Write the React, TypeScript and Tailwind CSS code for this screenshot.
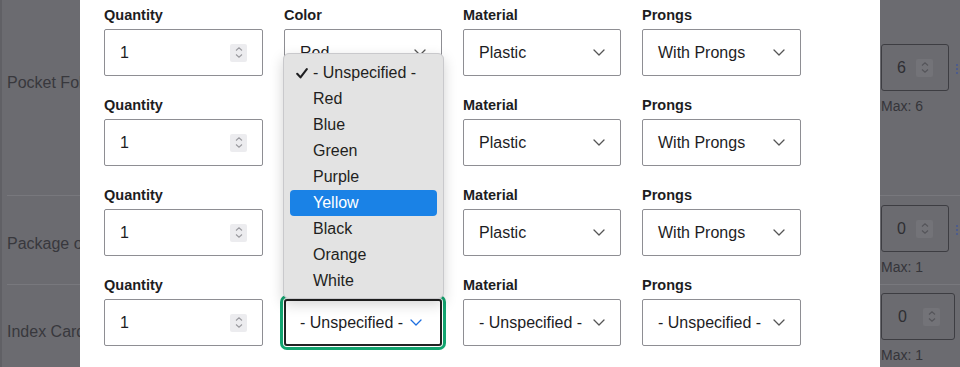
import React from 'react';

const font = { fontFamily: '"Liberation Sans", Arial, sans-serif' };

const Chevron = ({ color = '#555' }: { color?: string }) => (
  <svg width="12" height="7" viewBox="0 0 12 7" fill="none">
    <path d="M1 1l5 5 5-5" stroke={color} strokeWidth="1.3" strokeLinecap="round" strokeLinejoin="round" />
  </svg>
);

const Spinner = ({ dim = false }: { dim?: boolean }) => (
  <div
    className={
      dim
        ? 'flex h-[18px] w-[17px] flex-col items-center justify-center gap-[3px] rounded-[2px] bg-[#737378]'
        : 'flex h-[18px] w-[17px] flex-col items-center justify-center gap-[3px] rounded-[2px] bg-[#ececef]'
    }
  >
    <svg width="8" height="4" viewBox="0 0 8 4" fill="none">
      <path d="M1 3.5L4 0.8 7 3.5" stroke={dim ? '#55555a' : '#9a9a9f'} strokeWidth="1.1" />
    </svg>
    <svg width="8" height="4" viewBox="0 0 8 4" fill="none">
      <path d="M1 0.5L4 3.2 7 0.5" stroke={dim ? '#55555a' : '#9a9a9f'} strokeWidth="1.1" />
    </svg>
  </div>
);

const Dots = () => (
  <div className="ml-[7px] flex flex-col gap-[2px] pt-[3px]">
    <span className="h-[2px] w-[2px] bg-[#4d5c8c]" />
    <span className="h-[2px] w-[2px] bg-[#4d5c8c]" />
    <span className="h-[2px] w-[2px] bg-[#4d5c8c]" />
  </div>
);

// the page behind the dialog, already dimmed
const BgRow = ({
  name,
  value,
  max,
  wide,
  dots,
  className,
}: {
  name: string;
  value: string;
  max: string;
  wide?: boolean;
  dots?: boolean;
  className: string;
}) => (
  <div className={className}>
    <div className="flex items-start">
      <div className="flex w-[874px] items-center self-stretch pt-[6px] text-[16px] text-[#38383d]">{name}</div>
      <div className="flex flex-col">
        <div className="flex items-center">
          <div
            className={
              wide
                ? 'flex h-[47px] w-[74px] items-center justify-between rounded-[3px] border border-[#3d3d42] pl-[16px] pr-[14px] text-[16px] text-[#2f2f33]'
                : 'flex h-[47px] w-[68px] items-center justify-between rounded-[3px] border border-[#3d3d42] pl-[15px] pr-[15px] text-[16px] text-[#2f2f33]'
            }
          >
            <span>{value}</span>
            <Spinner dim />
          </div>
          {dots && <Dots />}
        </div>
        <div className="pt-[7px] text-[14px] leading-[17px] text-[#35353a]">Max: {max}</div>
      </div>
    </div>
  </div>
);

const Field = ({ label, children }: { label: string; children: React.ReactNode }) => (
  <div className="flex flex-col pb-[14px]">
    <div className="flex h-[29px] items-center pt-[3px] text-[14.5px] font-bold text-[#1d1d1f]">{label}</div>
    {children}
  </div>
);

const QtyInput = () => (
  <div className="flex h-[47px] items-center justify-between rounded-[2px] border border-[#8e8e93] pl-[15px] pr-[15px] text-[16px] text-[#1d1d1f]">
    <span>1</span>
    <Spinner />
  </div>
);

const Select = ({ value }: { value: string }) => (
  <div className="flex h-[47px] items-center justify-between overflow-hidden rounded-[2px] border border-[#8e8e93] pl-[15px] pr-[15px] text-[16px] text-[#1d1d1f]">
    <span className="whitespace-nowrap">{value}</span>
    <Chevron />
  </div>
);

const FocusedSelect = () => (
  <div className="flex h-[47px] items-center justify-between rounded-[3px] border-2 border-[#222] pl-[14px] pr-[18px] text-[16px] text-[#1d1d1f] shadow-[0_0_0_1px_#fff,0_0_0_4px_#13a46f]">
    <span className="whitespace-nowrap">- Unspecified -</span>
    <Chevron color="#1d6fe0" />
  </div>
);

const colors = ['- Unspecified -', 'Red', 'Blue', 'Green', 'Purple', 'Yellow', 'Black', 'Orange', 'White'];

const Menu = () => (
  <div className="absolute left-[203px] top-[53px] z-10 flex w-[161px] flex-col rounded-[6px] border border-[#c9c9cc] bg-[#e3e3e3] px-[6px] pb-[4px] pt-[6px] shadow-[0_5px_14px_rgba(0,0,0,0.18)]">
    {colors.map((c, i) => (
      <div
        key={c}
        className={
          c === 'Yellow'
            ? 'relative flex h-[26px] items-center rounded-[4px] bg-[#1a82e6] pl-[23px] text-[16px] text-white'
            : 'relative flex h-[26px] items-center pl-[23px] text-[16px] text-[#1f1f21]'
        }
      >
        {i === 0 && (
          <svg className="absolute left-[6px] top-[8px]" width="12" height="11" viewBox="0 0 12 11" fill="none">
            <path d="M1.2 5.8l3.3 3.6L10.8 1.2" stroke="#1f1f21" strokeWidth="2.1" strokeLinecap="round" strokeLinejoin="round" />
          </svg>
        )}
        {c}
      </div>
    ))}
  </div>
);

const rows = [
  { color: 'Red', material: 'Plastic', prongs: 'With Prongs' },
  { color: 'Red', material: 'Plastic', prongs: 'With Prongs' },
  { color: 'Red', material: 'Plastic', prongs: 'With Prongs' },
  { color: '', material: '- Unspecified -', prongs: '- Unspecified -' },
];

export default function App() {
  return (
    <div className="relative h-[367px] w-[960px] overflow-hidden bg-[#6b6b70]" style={font}>
      {/* dimmed page */}
      <div className="flex h-full flex-col border-l-2 border-[#606065]">
        <BgRow
          name="Pocket Folder"
          value="6"
          max="6"
          dots
          className="ml-[5px] h-[196px] border-b border-[#78787d] pt-[44px]"
        />
        <BgRow
          name="Package of Pens"
          value="0"
          max="1"
          dots
          className="ml-[5px] h-[89px] border-b border-[#78787d] pt-[9px]"
        />
        <BgRow name="Index Cards" value="0" max="1" wide className="ml-[5px] pt-[8px]" />
      </div>

      {/* dialog */}
      <div className="absolute left-[80px] top-0 h-[367px] w-[800px] bg-white pl-[24px]">
        <div className="grid grid-cols-[159px_158px_158px_159px] gap-x-[21px]">
          {rows.map((r, i) => (
            <React.Fragment key={i}>
              <Field label="Quantity">
                <QtyInput />
              </Field>
              <Field label="Color">{r.color ? <Select value={r.color} /> : <FocusedSelect />}</Field>
              <Field label="Material">
                <Select value={r.material} />
              </Field>
              <Field label="Prongs">
                <Select value={r.prongs} />
              </Field>
            </React.Fragment>
          ))}
        </div>
        <Menu />
      </div>
    </div>
  );
}
